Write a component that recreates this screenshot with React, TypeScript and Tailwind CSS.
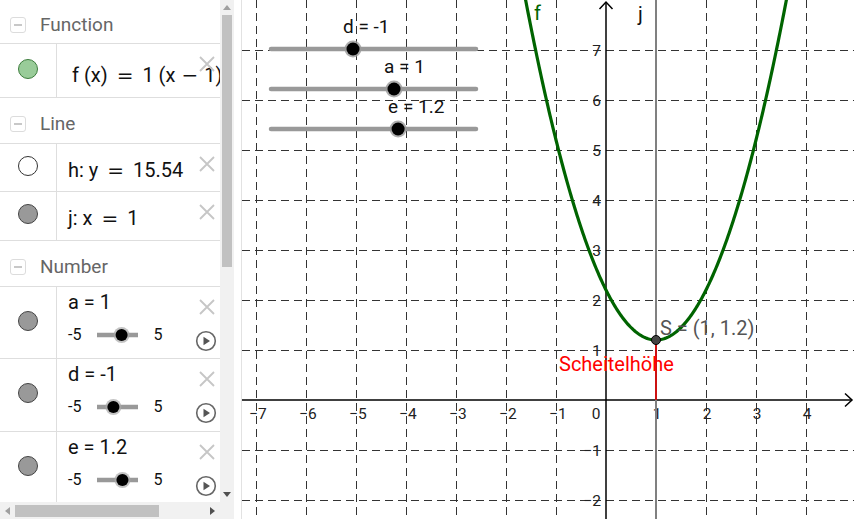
import React from 'react';

const X0 = 606;
const Y0 = 400;
const U = 50;
const px = (x: number) => X0 + x * U;
const py = (y: number) => Y0 - y * U;

const f = (x: number) => 1 * (x - 1) * (x - 1) + 1.2;

const curve = (() => {
  const pts: string[] = [];
  for (let X = 515; X <= 800; X += 1) {
    const x = (X - X0) / U;
    pts.push(`${X},${py(f(x)).toFixed(2)}`);
  }
  return 'M' + pts.join(' L');
})();

const CloseIcon = () => (
  <svg width="18" height="18" viewBox="0 0 18 18" className="absolute left-[141px] top-[11px]">
    <path d="M2 2 L16 16 M16 2 L2 16" stroke="#c6c6c6" strokeWidth="1.8" />
  </svg>
);

const PlayIcon = () => (
  <svg width="22" height="22" viewBox="0 0 22 22" className="absolute left-[138px] top-[43px]">
    <circle cx="11" cy="11" r="9.3" fill="none" stroke="#666" strokeWidth="1.6" />
    <path d="M8.5 6.8 L15 11 L8.5 15.2 Z" fill="#555" />
  </svg>
);

// wide math operators as in the formula renderer
const Op = ({ c, m = 'mx-[9px]' }: { c: string; m?: string }) => (
  <span className={`${m} font-['DejaVu_Sans',sans-serif]`}>{c}</span>
);

type Dot = 'green' | 'empty' | 'gray';

const Marker = ({ kind }: { kind: Dot }) => {
  const cls =
    kind === 'green'
      ? 'bg-[#99cc99] border-[#3d7d3d]'
      : kind === 'empty'
      ? 'bg-white border-[#333]'
      : 'bg-[#999] border-[#444]';
  return <div className={`w-[20px] h-[20px] rounded-full border ${cls}`} />;
};

const Header = ({ title, h }: { title: string; h: string }) => (
  <div className={`flex items-center ${h} border-b border-[#dedede] pl-[10px] pt-[7px]`}>
    <div className="w-[16px] h-[16px] rounded-[3px] border border-[#dcdcdc] flex items-center justify-center">
      <div className="w-[8px] h-[1.5px] bg-[#c8c8c8]" />
    </div>
    <span className="ml-[14px] text-[19px] text-[#666]">{title}</span>
  </div>
);

const Row = ({ kind, h, children }: { kind: Dot; h: string; children: React.ReactNode }) => (
  <div className={`flex ${h} border-b border-[#dedede]`}>
    <div className="w-[57px] shrink-0 border-r border-[#dedede] flex items-center justify-center pb-[4px]">
      <Marker kind={kind} />
    </div>
    <div className="relative flex-1 overflow-hidden">{children}</div>
  </div>
);

const MiniSlider = ({ value }: { value: number }) => {
  const kx = 4 + ((value + 5) / 10) * 41;
  return (
    <svg width="50" height="20" viewBox="0 0 50 20" className="ml-[12px]">
      <line x1="4" y1="10" x2="45" y2="10" stroke="#999" strokeWidth="4.5" />
      <circle cx={kx} cy="10" r="8" fill="#aaa" opacity="0.7" />
      <circle cx={kx} cy="10" r="6" fill="#000" />
    </svg>
  );
};

const NumberRow = ({ name, value, h }: { name: string; value: string; h: string }) => (
  <Row kind="gray" h={h}>
    <div className="pl-[11px] pt-[3px]">
      <div className="text-[20px] leading-[24px] text-[#111]">
        {name} = {value}
      </div>
      <div className="flex items-center mt-[9px] text-[16px] text-[#111]">
        <span>-5</span>
        <MiniSlider value={parseFloat(value)} />
        <span className="ml-[10px]">5</span>
      </div>
    </div>
    <CloseIcon />
    <PlayIcon />
  </Row>
);

const AlgebraView = () => (
  <div className="w-[242px] h-full shrink-0 border-r border-[#e2e2e2] flex flex-col">
    <div className="flex flex-1 min-h-0">
      <div className="w-[220px] overflow-hidden">
        <Header title="Function" h="h-[44px]" />
        <Row kind="green" h="h-[54px]">
          <div className="pl-[15px] pt-[19px] text-[20px] leading-[24px] whitespace-nowrap text-[#111]">
            f (x)
            <Op c="=" />1 (x<Op c="−" m="mx-[6px]" />1)² + 1.2
          </div>
          <CloseIcon />
        </Row>
        <Header title="Line" h="h-[46px]" />
        <Row kind="empty" h="h-[48px]">
          <div className="pl-[11px] pt-[14px] text-[20px] leading-[24px] whitespace-nowrap text-[#111]">
            h: y<Op c="=" />15.54
          </div>
          <CloseIcon />
        </Row>
        <Row kind="gray" h="h-[49px]">
          <div className="pl-[11px] pt-[14px] text-[20px] leading-[24px] whitespace-nowrap text-[#111]">
            j: x<Op c="=" />1
          </div>
          <CloseIcon />
        </Row>
        <Header title="Number" h="h-[46px]" />
        <NumberRow name="a" value="1" h="h-[72px]" />
        <NumberRow name="d" value="-1" h="h-[73px]" />
        <NumberRow name="e" value="1.2" h="h-[73px]" />
      </div>
      <div className="w-[14px] bg-[#f1f1f1] flex flex-col items-center">
        <div className="h-[15px] flex items-center">
          <div className="w-0 h-0 border-l-[4px] border-r-[4px] border-b-[5px] border-l-transparent border-r-transparent border-b-[#a0a0a0]" />
        </div>
        <div className="w-[10px] h-[252px] bg-[#c1c1c1]" />
        <div className="flex-1" />
        <div className="h-[15px] flex items-center">
          <div className="w-0 h-0 border-l-[4px] border-r-[4px] border-t-[5px] border-l-transparent border-r-transparent border-t-[#505050]" />
        </div>
      </div>
    </div>
    <div className="h-[17px] flex bg-[#f1f1f1] w-[234px]">
      <div className="w-[15px] flex items-center justify-center">
        <div className="w-0 h-0 border-t-[4px] border-b-[4px] border-r-[5px] border-t-transparent border-b-transparent border-r-[#a0a0a0]" />
      </div>
      <div className="flex items-center">
        <div className="w-[144px] h-[12px] bg-[#c1c1c1]" />
      </div>
      <div className="w-[61px] flex items-center justify-end pr-[5px]">
        <div className="w-0 h-0 border-t-[4px] border-b-[4px] border-l-[5px] border-t-transparent border-b-transparent border-l-[#505050]" />
      </div>
    </div>
  </div>
);

const GraphSlider = ({ y, value, label }: { y: number; value: number; label: string }) => {
  const x1 = 271;
  const x2 = 476;
  const kx = x1 + ((value + 5) / 10) * (x2 - x1);
  return (
    <g>
      <line x1={x1} y1={y} x2={x2} y2={y} stroke="#999" strokeWidth="4.5" strokeLinecap="round" />
      <circle cx={kx} cy={y} r="8.5" fill="#999" opacity="0.8" />
      <circle cx={kx} cy={y} r="6.5" fill="#000" />
      <text x={kx - 10} y={y - 16} fontSize="19" fill="#111">
        {label}
      </text>
    </g>
  );
};

const Graphics = () => {
  const gx = [-7, -6, -5, -4, -3, -2, -1, 1, 2, 3, 4, 5];
  const gy = [-2, -1, 1, 2, 3, 4, 5, 6, 7];
  return (
    <svg
      className="flex-1 h-full block"
      viewBox="242 0 612 519"
      fontFamily="Roboto, sans-serif"
    >
      <rect x="242" y="0" width="612" height="519" fill="#fff" />
      <g stroke="#333" strokeWidth="1" strokeDasharray="8 5">
        {gx.map((k) => (
          <line key={'v' + k} x1={px(k) + 0.5} y1={0} x2={px(k) + 0.5} y2={519} />
        ))}
        {gy.map((k) => (
          <line key={'h' + k} x1={242} y1={py(k) + 0.5} x2={854} y2={py(k) + 0.5} />
        ))}
      </g>
      {/* axes */}
      <g stroke="#000" strokeWidth="1.5" fill="none">
        <line x1={242} y1={Y0} x2={852} y2={Y0} />
        <path d="M845 393.5 L852 400 L845 406.5" />
        <line x1={X0} y1={519} x2={X0} y2={2} />
        <path d="M599.5 9 L606 2 L612.5 9" />
      </g>
      <g fontSize="15.5" fill="#222">
        {[-7, -6, -5, -4, -3, -2, -1].map((k) => (
          <text key={'xl' + k} x={px(k) + 2} y={419} textAnchor="middle">
            {'−' + Math.abs(k)}
          </text>
        ))}
        {[1, 2, 3, 4].map((k) => (
          <text key={'xp' + k} x={px(k) + 1} y={419} textAnchor="middle">
            {k}
          </text>
        ))}
        <text x={596} y={419} textAnchor="middle">
          0
        </text>
        {[-2, -1, 1, 2, 3, 4, 5, 6, 7].map((k) => (
          <text key={'yl' + k} x={601} y={py(k) + 5.5} textAnchor="end">
            {k < 0 ? '−' + Math.abs(k) : k}
          </text>
        ))}
      </g>
      {/* line j */}
      <line x1={656} y1={0} x2={656} y2={519} stroke="#808080" strokeWidth="2" />
      <text x={638} y={21} fontSize="20" fill="#111">
        j
      </text>
      {/* Scheitelhöhe segment */}
      <line x1={656} y1={Y0} x2={656} y2={py(1.2)} stroke="#cc1111" strokeWidth="2" />
      <text x={559} y={371} fontSize="20" fill="#ff0000">
        Scheitelhöhe
      </text>
      {/* function f */}
      <path d={curve} fill="none" stroke="#006400" strokeWidth="3.2" />
      <text x={534} y={20} fontSize="20" fill="#006400">
        f
      </text>
      {/* point S */}
      <circle cx={656} cy={py(1.2)} r="4.5" fill="#444" stroke="#000" strokeWidth="1" />
      <text x={660} y={335} fontSize="20" fill="#555">
        S = (1, 1.2)
      </text>
      {/* sliders */}
      <GraphSlider y={49} value={-1} label="d = -1" />
      <GraphSlider y={89} value={1} label="a = 1" />
      <GraphSlider y={129} value={1.2} label="e = 1.2" />
    </svg>
  );
};

export default function App() {
  return (
    <div className="w-[854px] h-[519px] flex overflow-hidden bg-white font-['Roboto',sans-serif]">
      <AlgebraView />
      <Graphics />
    </div>
  );
}
